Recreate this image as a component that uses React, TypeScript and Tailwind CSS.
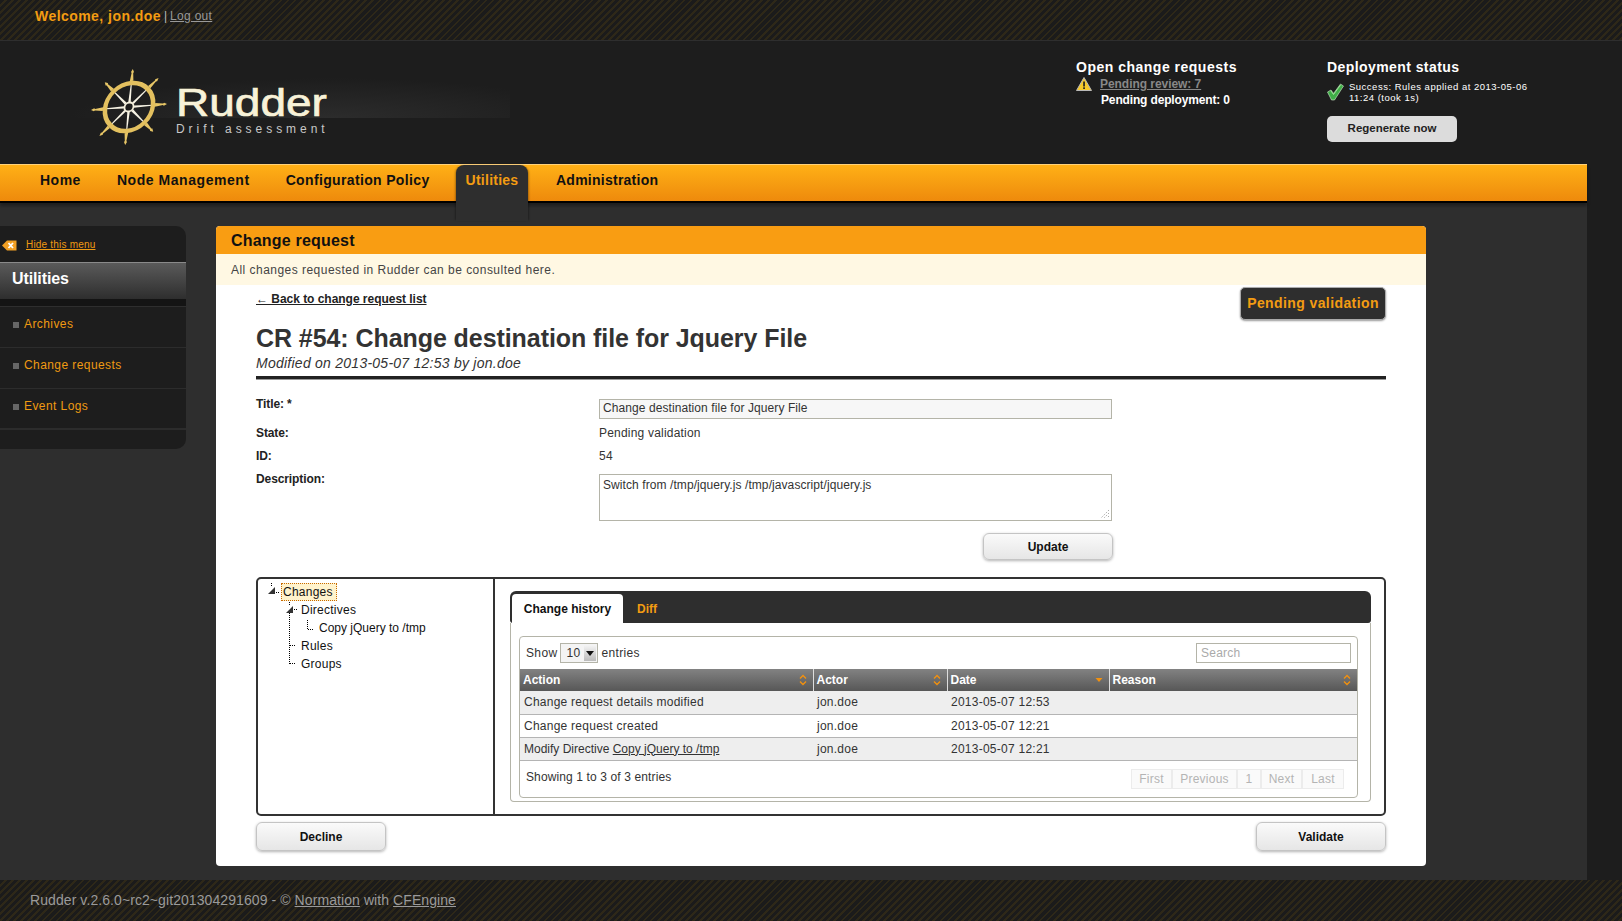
import React from "react";

const stripes =
  "bg-[repeating-linear-gradient(135deg,#1b1b1b_0px,#1b1b1b_3px,#2e2818_3px,#2e2818_5px)]";
const btn =
  "flex items-center justify-center rounded-[6px] border border-[#c4c4c4] bg-[linear-gradient(#fafafa,#e6e6e6)] shadow-[0_1px_3px_rgba(0,0,0,0.3)] text-[12px] font-bold text-[#111]";

function Wheel() {
  const spokes = [0, 45, 90, 135, 180, 225, 270, 315];
  return (
    <svg width="80" height="80" viewBox="-40 -40 80 80" className="shrink-0">
      <g transform="matrix(1,-0.08,-0.1,1,0,0)">
        {spokes.map((a) => (
          <g key={a} transform={`rotate(${a})`}>
            <path d="M-1.8 -26 L1.8 -26 L0.8 -34 L1.5 -35 L0 -38 L-1.5 -35 L-0.8 -34 Z" fill="#e6c566" />
            <path d="M-1.2 -5 L-0.5 -23 L0.5 -23 L1.2 -5 Z" fill="#f7f3e4" />
          </g>
        ))}
        <circle r="24" fill="none" stroke="#e3c05f" strokeWidth="4.5" />
        <circle r="4.5" fill="#1d1d1d" stroke="#f5f0dc" strokeWidth="1.8" />
      </g>
    </svg>
  );
}

function Warn() {
  return (
    <svg width="16" height="14" viewBox="0 0 16 14" className="shrink-0">
      <path d="M8 0.5 L15.5 13.5 L0.5 13.5 Z" fill="#f6c92a" stroke="#b9b9b9" strokeWidth="1" />
      <rect x="7.2" y="4.5" width="1.7" height="5" fill="#222" />
      <rect x="7.2" y="10.3" width="1.7" height="1.7" fill="#222" />
    </svg>
  );
}

function Check() {
  return (
    <svg width="17" height="18" viewBox="0 0 17 18" className="shrink-0">
      <path d="M0.5 9 L4 7 L6.5 10.5 L13.5 1 L16.5 3 L7.5 17 L4.5 17 Z" fill="#3fae47" stroke="#d5eed0" strokeWidth="0.6" />
      <path d="M4 8 L6.5 11.5 L13.5 2" fill="none" stroke="#9fe09a" strokeWidth="1" />
    </svg>
  );
}

function HideIcon() {
  return (
    <svg width="15" height="11" viewBox="0 0 15 11" className="shrink-0">
      <path d="M0 5.5 L5 0.5 L14.5 0.5 L14.5 10.5 L5 10.5 Z" fill="#f2a024" />
      <path d="M6.5 3 L11 8 M11 3 L6.5 8" stroke="#fff" strokeWidth="1.8" />
    </svg>
  );
}

function Sort({ active }: { active?: boolean }) {
  return (
    <svg width="8" height="12" viewBox="0 0 8 12" className="shrink-0">
      {active ? (
        <path d="M0.5 4 L7.5 4 L4 8 Z" fill="#f2910f" />
      ) : (
        <path d="M1 4.5 L4 1.5 L7 4.5 M1 7.5 L4 10.5 L7 7.5" fill="none" stroke="#f2910f" strokeWidth="1.4" />
      )}
    </svg>
  );
}

function SideItem({ label, last }: { label: string; last?: boolean }) {
  return (
    <div className={`h-[41px] flex items-start pt-[8px] border-[#2c2c2c] pl-[13px] gap-[5px] ${last ? "border-b-2" : "border-b"}`}>
      <span className="w-[6px] h-[6px] mt-[7px] bg-[#666]" />
      <span className="text-[12px] tracking-[0.42px] text-[#ef9a12]">{label}</span>
    </div>
  );
}

const rows: [React.ReactNode, string, string, boolean][] = [
  ["Change request details modified", "jon.doe", "2013-05-07 12:53", true],
  ["Change request created", "jon.doe", "2013-05-07 12:21", false],
  [
    <span key="m" className="tracking-[0px]">
      Modify Directive <span className="underline">Copy jQuery to /tmp</span>
    </span>,
    "jon.doe",
    "2013-05-07 12:21",
    true,
  ],
];

function Th({ label, w, active }: { label: string; w: string; active?: boolean }) {
  return (
    <th className={`${w} h-[22px] px-[3px] border-r border-[#ddd] last:border-r-0 font-bold text-left text-white`}>
      <div className="flex items-center justify-between pr-[3px]">
        <span className="text-[12px] tracking-[0px]">{label}</span>
        <Sort active={active} />
      </div>
    </th>
  );
}

function FormRow({ label, children, h }: { label: string; children: React.ReactNode; h: string }) {
  return (
    <div className={`flex ${h}`}>
      <div className="w-[343px] text-[12px] font-bold tracking-[-0.1px] text-[#222]">{label}</div>
      <div className="flex-1 text-[12px] text-[#333]">{children}</div>
    </div>
  );
}

export default function App() {
  return (
    <div className="w-[1622px] h-[921px] overflow-hidden flex flex-col bg-[#1d1d1d] font-['Liberation_Sans',Arial,sans-serif]">
      <div className={`h-[41px] shrink-0 border-b border-[#2e2e2e] pl-[35px] pt-[6px] flex items-start ${stripes}`}>
        <span className="text-[14px] font-bold tracking-[0.45px] text-[#f39c12]">Welcome, jon.doe</span>
        <span className="text-[12px] text-[#bbb] ml-[3px] mt-[1px]">|</span>
        <span className="text-[12px] tracking-[0.3px] text-[#999] underline ml-[3px] mt-[1px]">Log out</span>
      </div>

      <div className="h-[123px] shrink-0 flex bg-[#1d1d1d]">
        <div className="w-[1076px]">
          <div className="w-[510px] h-[123px] pl-[89px] pt-[26px] flex items-start bg-[linear-gradient(#0000_77px,#1d1d1d_77px),radial-gradient(ellipse_260px_40px_at_330px_77px,#2c2c2c,#1d1d1d)]">
            <Wheel />
            <div className="ml-[7px] mt-[17px] flex flex-col">
              <span className="inline-block origin-left scale-x-[1.18] text-[39px] leading-[38px] text-[#f8f2d8] [-webkit-text-stroke:0.7px_#f8f2d8]">Rudder</span>
              <span className="text-[12px] leading-[14px] tracking-[3.95px] text-[#c8c8c8]">Drift assessment</span>
            </div>
          </div>
        </div>
        <div className="w-[251px] pt-[18px]">
          <div className="text-[14px] font-bold tracking-[0.5px] text-white leading-[16px]">Open change requests</div>
          <div className="flex items-center h-[17px]">
            <Warn />
            <span className="ml-[8px] text-[12px] font-bold tracking-[-0.05px] text-[#888] underline">Pending review: 7</span>
          </div>
          <div className="pl-[25px] text-[12px] font-bold tracking-[-0.15px] text-white leading-[17px]">Pending deployment: 0</div>
        </div>
        <div className="w-[220px] pt-[18px]">
          <div className="text-[14px] font-bold tracking-[0.42px] text-white leading-[16px]">Deployment status</div>
          <div className="flex items-center gap-[5px] mt-[6px]">
            <Check />
            <span className="text-[9.5px] tracking-[0.5px] leading-[11px] text-white">Success: Rules applied at 2013-05-06 11:24 (took 1s)</span>
          </div>
          <div className="mt-[13px] w-[130px] h-[26px] rounded-[5px] bg-[#dcdcdc] flex items-center justify-center text-[11.5px] font-bold text-[#222]">
            Regenerate now
          </div>
        </div>
      </div>

      <div className="w-[1587px] flex-1 min-h-0 flex flex-col bg-[#2e2e2e]">
        <div className="relative h-[39px] shrink-0 flex items-start border-t border-[#ffd27a] border-b-2 border-b-black bg-[linear-gradient(#ffb016,#ee8a0c)] shadow-[0_3px_3px_rgba(0,0,0,0.35)] text-[14px] font-bold text-[#111]">
          <span className="ml-[40px] mt-[5px] tracking-[0.5px]">Home</span>
          <span className="ml-[36px] mt-[5px] tracking-[0.55px]">Node Management</span>
          <span className="ml-[36px] mt-[5px] tracking-[0.35px]">Configuration Policy</span>
          <span className="absolute left-[456px] top-0 w-[72px] h-[56px] rounded-t-[8px] bg-[#2e2e2e] pt-[5px] text-center text-[#f39c12] tracking-[0.25px] shadow-[2px_0_2px_-1px_rgba(0,0,0,0.3),-2px_0_2px_-1px_rgba(0,0,0,0.3)]">Utilities</span>
          <span className="absolute left-[556px] top-[5px] tracking-[0.25px]">Administration</span>
        </div>

        <div className="flex items-start pt-[23px]">
          <div className="w-[186px] h-[223px] shrink-0 rounded-r-[10px] bg-[#1d1d1d]">
            <div className="h-[36px] flex items-start pl-[2px] gap-[9px] pt-[14px]">
              <HideIcon />
              <span className="text-[10px] -mt-[3px] tracking-[0.2px] underline text-[#ef9a12]">Hide this menu</span>
            </div>
            <div className="h-[37px] border-t border-[#8a8a8a] pl-[12px] pt-[6px] bg-[linear-gradient(#5a5a5a,#2e2e2e)] text-[16px] font-bold tracking-[-0.1px] text-white leading-[20px]">
              Utilities
            </div>
            <div className="h-[8px] bg-[#141414] border-b border-[#2e2e2e]" />
            <SideItem label="Archives" />
            <SideItem label="Change requests" />
            <SideItem label="Event Logs" last />
          </div>

          <div className="ml-[30px] w-[1210px] h-[640px] rounded-[4px] bg-white overflow-hidden">
            <div className="h-[28px] bg-[#f99d12] pl-[15px] text-[16px] leading-[30px] font-bold tracking-[0.2px] text-[#111]">Change request</div>
            <div className="h-[31px] bg-[#fff8e3] pl-[15px] text-[12px] leading-[33px] tracking-[0.47px] text-[#444]">All changes requested in Rudder can be consulted here.</div>
            <div className="relative px-[40px]">
              <div className="absolute right-[40px] top-[2px] h-[33px] w-[146px] rounded-[5px] bg-[#2e2e2e] border border-[#aaa] flex items-center justify-center text-[14px] font-bold tracking-[0.4px] text-[#f39c12] shadow-[0_1px_2px_rgba(0,0,0,0.4)]">
                Pending validation
              </div>
              <div className="pt-[7px] text-[12px] font-bold tracking-[-0.03px] text-[#222] underline leading-[14px]">← Back to change request list</div>
              <div className="mt-[17px] text-[25px] leading-[30px] font-bold tracking-[-0.07px] text-[#333]">CR #54: Change destination file for Jquery File</div>
              <div className="mt-[1px] text-[14px] leading-[18px] italic tracking-[0.25px] text-[#333]">Modified on 2013-05-07 12:53 by jon.doe</div>
              <div className="mt-[4px] h-[4px] bg-[#222] border-b border-[#999]" />

              <div className="mt-[15px]">
                <FormRow label="Title: *" h="h-[29px]">
                  <div className="mt-[4px] h-[20px] border border-[#b4b4a8] bg-[#f7f7f7] pl-[3px] leading-[16px] w-[513px] tracking-[0.08px]">Change destination file for Jquery File</div>
                </FormRow>
                <FormRow label="State:" h="h-[23px]"><span className="tracking-[0.2px]">Pending validation</span></FormRow>
                <FormRow label="ID:" h="h-[23px]"><span className="tracking-[0.4px]">54</span></FormRow>
                <FormRow label="Description:" h="h-[51px]">
                  <div className="relative mt-[4px] h-[47px] border border-[#b4b4a8] pl-[3px] pt-[1px] w-[513px] tracking-[0.08px]">
                    Switch from /tmp/jquery.js /tmp/javascript/jquery.js
                    <svg width="10" height="10" viewBox="0 0 10 10" className="absolute right-[1px] bottom-[1px]">
                      <path d="M9 1 L1 9 M9 4 L4 9 M9 7 L7 9" stroke="#aaa" strokeWidth="1" strokeDasharray="1.5 1.5" />
                    </svg>
                  </div>
                </FormRow>
              </div>
              <div className="flex justify-end mt-[12px]">
                <div className={`${btn} w-[130px] h-[27px] mr-[273px]`}>Update</div>
              </div>

              <div className="mt-[17px] h-[239px] rounded-[5px] border-2 border-[#333] flex overflow-hidden">
                <div className="relative w-[237px] shrink-0 border-r-2 border-[#333] pt-[4px] text-[12px] tracking-[0.25px] text-[#111]">
                  <svg width="60" height="90" viewBox="0 0 60 90" className="absolute left-[8px] top-[4px]">
                    <path d="M5.5 0 V4 M10 9.5 H14 M23.5 19 V23 M23.5 30 V81 M28 26.5 H32 M24 62.5 H30 M24 80.5 H30 M41.5 37 V46.5 H47" fill="none" stroke="#000" strokeDasharray="1 1" />
                    <path d="M2 11 L9 11 L9 4 Z" fill="#333" />
                    <path d="M20 30 L27 30 L27 23 Z" fill="#333" />
                  </svg>
                  <div className="ml-[23px] w-[56px] h-[18px] border border-dotted border-[#c86a00] bg-[#fff3cc] pl-[1px] leading-[17px]">Changes</div>
                  <div className="ml-[43px] h-[18px] leading-[18px]">Directives</div>
                  <div className="ml-[61px] h-[18px] leading-[18px] tracking-[0px]">Copy jQuery to /tmp</div>
                  <div className="ml-[43px] h-[18px] leading-[18px]">Rules</div>
                  <div className="ml-[43px] h-[18px] leading-[18px]">Groups</div>
                </div>

                <div className="flex-1 pl-[15px] pr-[13px] pt-[12px]">
                  <div className="h-[32px] rounded-t-[6px] rounded-b-[3px] bg-[#2e2e2e] flex items-end pl-[2px] text-[12px] font-bold">
                    <div className="w-[111px] h-[29px] rounded-t-[4px] bg-white text-[#111] flex items-center justify-center">Change history</div>
                    <div className="ml-[14px] h-[29px] flex items-center text-[#f39c12]">Diff</div>
                  </div>
                  <div className="h-[179px] border border-[#b4b4a8] border-t-0 rounded-b-[4px] pl-[8px] pr-[12px] pt-[13px]">
                    <div className="h-[162px] border border-[#b4b4a8] rounded-[4px] text-[12px] tracking-[0.25px] text-[#333]">
                      <div className="h-[32px] flex items-center justify-between pl-[6px] pr-[6px]">
                        <div className="flex items-center tracking-[0.35px]">
                          Show
                          <div className="mx-[3px] w-[38px] h-[20px] border border-[#b4b4a8] bg-[#f4f4f4] flex items-center pl-[5px] justify-between pr-[1px]">
                            10
                            <span className="w-[12px] h-[16px] bg-[linear-gradient(#f5f5f5,#bbb)] flex items-center justify-center">
                              <svg width="8" height="5" viewBox="0 0 8 5"><path d="M0 0 H8 L4 5 Z" fill="#111" /></svg>
                            </span>
                          </div>
                          entries
                        </div>
                        <div className="w-[155px] h-[20px] border border-[#b4b4a8] pl-[4px] leading-[18px] text-[#aaa]">Search</div>
                      </div>
                      <table className="w-full border-collapse table-fixed">
                        <thead>
                          <tr className="bg-[linear-gradient(#828282,#575757)]">
                            <Th label="Action" w="w-[293px]" />
                            <Th label="Actor" w="w-[134px]" />
                            <Th label="Date" w="w-[162px]" active />
                            <Th label="Reason" w="w-auto" />
                          </tr>
                        </thead>
                        <tbody>
                          {rows.map((r, i) => (
                            <tr key={i} className={`h-[23px] border-b border-[#b4b4b4] ${r[3] ? "bg-[#eeeeee]" : "bg-white"}`}>
                              <td className="pl-[4px]">{r[0]}</td>
                              <td className="pl-[4px]">{r[1]}</td>
                              <td className="pl-[4px]">{r[2]}</td>
                              <td />
                            </tr>
                          ))}
                        </tbody>
                      </table>
                      <div className="flex justify-between pl-[6px] pr-[13px] pt-[7px]">
                        <span className="tracking-[0.12px]">Showing 1 to 3 of 3 entries</span>
                        <div className="flex h-[20px] mt-[1px] text-[#b4b4b4]">
                          {[["First", "w-[41px]"], ["Previous", "w-[65px]"], ["1", "w-[24px]"], ["Next", "w-[41px]"], ["Last", "w-[42px]"]].map(([t, w]) => (
                            <span key={t} className={`${w} h-[20px] flex items-center justify-center border border-[#ececec] bg-[#fafafa]`}>{t}</span>
                          ))}
                        </div>
                      </div>
                    </div>
                  </div>
                </div>
              </div>

              <div className="flex justify-between mt-[6px]">
                <div className={`${btn} w-[130px] h-[29px]`}>Decline</div>
                <div className={`${btn} w-[130px] h-[29px]`}>Validate</div>
              </div>
            </div>
          </div>
        </div>
      </div>

      <div className={`h-[41px] shrink-0 pl-[30px] pt-[10px] text-[14px] tracking-[0.08px] text-[#9a9a9a] ${stripes}`}>
        Rudder v.2.6.0~rc2~git201304291609 - © <span className="underline">Normation</span> with <span className="underline">CFEngine</span>
      </div>
    </div>
  );
}
